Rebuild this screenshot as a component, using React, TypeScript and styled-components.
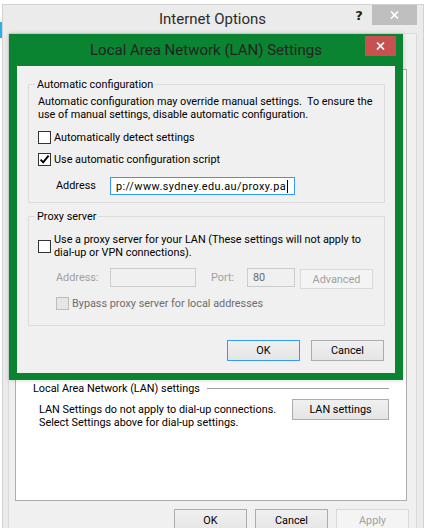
import React from 'react'
import styled, { createGlobalStyle } from 'styled-components'

const uiFont = `Roboto, 'Noto Sans', 'DejaVu Sans', sans-serif`

const GlobalStyle = createGlobalStyle`
  * { box-sizing: border-box; }
  html, body { margin: 0; padding: 0; background: #ffffff; }
  body { font-family: ${uiFont}; font-size: 10.85px; color: #000000; }
`

const Desktop = styled.div`
  position: relative;
  width: 427px;
  height: 528px;
  overflow: hidden;
  background: #ffffff;
`

const DesktopSliver = styled.div`
  position: absolute;
  left: 0;
  top: 22px;
  width: 2px;
  height: 16px;
  background: #27b1e6;
`

const Window = styled.div`
  position: absolute;
  left: 2px;
  top: 4px;
  width: 422px;
  height: 540px;
  display: flex;
  flex-direction: column;
  padding: 0 6px 0 5px;
  background: #ebebeb;
  border: 1px solid #d2d2d2;
`

const CaptionBar = styled.div<{ $height: number }>`
  display: grid;
  grid-template-columns: 1fr auto 1fr;
  align-items: start;
  height: ${p => p.$height}px;
  flex-shrink: 0;
`

const Caption = styled.div<{ $color: string; $height: number }>`
  grid-column: 2;
  font-size: 15px;
  line-height: ${p => p.$height}px;
  color: ${p => p.$color};
  white-space: nowrap;
`

const CaptionControls = styled.div<{ $top?: number; $right?: number }>`
  grid-column: 3;
  justify-self: end;
  display: flex;
  margin-top: ${p => p.$top ?? 0}px;
  margin-right: ${p => p.$right ?? 0}px;
`

const HelpButton = styled.div`
  width: 26px;
  height: 20px;
  display: flex;
  align-items: center;
  justify-content: center;
  font-family: 'DejaVu Sans', sans-serif;
  font-size: 13px;
  font-weight: 700;
  color: #1e1e1e;
`

const CloseButton = styled.div<{ $width: number; $bg: string }>`
  width: ${p => p.$width}px;
  height: 20px;
  display: flex;
  align-items: center;
  justify-content: center;
  background: ${p => p.$bg};
`

const Client = styled.div`
  flex: 1;
  display: flex;
  flex-direction: column;
  padding: 0 9px 0 6px;
  background: #f0f0f0;
  border: 1px solid #dadada;
  border-bottom: none;
`

const TabStrip = styled.div`
  height: 35px;
  flex-shrink: 0;
`

const TabPanel = styled.div`
  width: 392px;
  height: 432px;
  display: flex;
  flex-direction: column;
  justify-content: flex-end;
  padding: 0 17px 71px 17px;
  background: #ffffff;
  border: 1px solid #adadad;
  flex-shrink: 0;
`

const SectionHeader = styled.div`
  display: flex;
  align-items: center;
  gap: 7px;
  line-height: 13px;
  white-space: nowrap;

  &::after {
    content: '';
    flex: 1;
    height: 1px;
    background: #a0a0a0;
  }
`

const SectionBody = styled.div`
  display: flex;
  justify-content: space-between;
  align-items: flex-start;
  margin-top: 4px;
`

const SectionText = styled.p`
  margin: 4px 0 0 6px;
  line-height: 13px;
  white-space: nowrap;
`

const PushButton = styled.div<{ $width: number; $height: number; $default?: boolean; $disabled?: boolean }>`
  width: ${p => p.$width}px;
  height: ${p => p.$height}px;
  display: flex;
  align-items: center;
  justify-content: center;
  flex-shrink: 0;
  white-space: nowrap;
  color: ${p => (p.$disabled ? '#a0a0a0' : '#000000')};
  background: ${p => (p.$disabled ? '#f4f4f4' : 'linear-gradient(#f0f0f0, #e5e5e5)')};
  border: 1px solid ${p => (p.$default ? '#3399ff' : p.$disabled ? '#d9d9d9' : '#acacac')};
`

const ButtonRow = styled.div<{ $gap: number; $top: number; $right: number }>`
  display: flex;
  justify-content: flex-end;
  gap: ${p => p.$gap}px;
  margin-top: ${p => p.$top}px;
  margin-right: ${p => p.$right}px;
  flex-shrink: 0;
`

const Dialog = styled.div`
  position: absolute;
  left: 9px;
  top: 34px;
  width: 394px;
  height: 346px;
  display: flex;
  flex-direction: column;
  padding: 0 8px 7px 8px;
  background: #0a8431;
  box-shadow: 0 0 5px rgba(0, 0, 0, 0.18);
`

const DialogClient = styled.div`
  flex: 1;
  display: flex;
  flex-direction: column;
  padding: 12px 10px 0 11px;
  background: #f0f0f0;
`

const GroupBox = styled.fieldset<{ $top?: number }>`
  margin: ${p => p.$top ?? 0}px 0 0 0;
  padding: 0;
  min-width: 0;
  border: 1px solid #dcdcdc;
`

const GroupLegend = styled.legend`
  margin-left: 6px;
  padding: 0 2px;
  line-height: 13px;
`

const GroupBody = styled.div<{ $top: number; $bottom: number }>`
  display: flex;
  flex-direction: column;
  padding: ${p => p.$top}px 8px ${p => p.$bottom}px 9px;
`

const Note = styled.p`
  margin: 0;
  line-height: 13px;
  white-space: nowrap;
`

const CheckRow = styled.div<{ $top?: number; $indent?: number }>`
  display: flex;
  align-items: center;
  gap: 3px;
  min-height: 16px;
  margin-top: ${p => p.$top ?? 0}px;
  margin-left: ${p => p.$indent ?? 0}px;
`

const CheckBox = styled.div<{ $disabled?: boolean }>`
  width: 13px;
  height: 13px;
  flex-shrink: 0;
  display: flex;
  align-items: center;
  justify-content: center;
  background: ${p => (p.$disabled ? '#e6e6e6' : '#ffffff')};
  border: 1px solid ${p => (p.$disabled ? '#bcbcbc' : '#333333')};
`

const CheckLabel = styled.span<{ $tone?: string }>`
  line-height: 13px;
  white-space: nowrap;
  color: ${p => p.$tone ?? '#000000'};
`

const FieldRow = styled.div<{ $top: number }>`
  display: flex;
  align-items: flex-start;
  margin-top: ${p => p.$top}px;
  margin-left: 18px;
`

const FieldLabel = styled.span<{ $width: number; $height: number; $gap?: number; $disabled?: boolean }>`
  width: ${p => p.$width}px;
  margin-left: ${p => p.$gap ?? 0}px;
  line-height: ${p => p.$height}px;
  flex-shrink: 0;
  color: ${p => (p.$disabled ? '#a0a0a0' : '#000000')};
`

const TextBox = styled.div<{ $width: number; $height: number; $focused?: boolean; $disabled?: boolean }>`
  width: ${p => p.$width}px;
  height: ${p => p.$height}px;
  flex-shrink: 0;
  display: flex;
  align-items: center;
  padding-left: 5px;
  overflow: hidden;
  white-space: nowrap;
  color: ${p => (p.$disabled ? '#6d6d6d' : '#000000')};
  background: ${p => (p.$disabled ? '#f0f0f0' : '#ffffff')};
  border: 1px solid ${p => (p.$focused ? '#3399ff' : p.$disabled ? '#cccccc' : '#abadb3')};
`

const UrlValue = styled.span`
  letter-spacing: 0.45px;
`

const SideButton = styled(PushButton)`
  margin-left: 5px;
  margin-top: 1px;
`

const Caret = styled.span`
  display: inline-block;
  width: 1px;
  height: 13px;
  margin-left: 1px;
  background: #000000;
`

const CloseGlyph = () => (
  <svg width="9" height="8" viewBox="0 0 9 8">
    <path d="M1 0.5 L8 7.5 M8 0.5 L1 7.5" stroke="#ffffff" strokeWidth="1.7" fill="none" />
  </svg>
)

const CheckGlyph = () => (
  <svg width="11" height="11" viewBox="0 0 11 11">
    <path d="M1.6 5.6 L4.2 8.4 L9.6 1.6" stroke="#000000" strokeWidth="1.9" fill="none" />
  </svg>
)

export default function App() {
  return (
    <Desktop>
      <GlobalStyle />
      <DesktopSliver />

      <Window>
        <CaptionBar $height={28}>
          <Caption $color="#2b2b2b" $height={28}>Internet Options</Caption>
          <CaptionControls>
            <HelpButton>?</HelpButton>
            <CloseButton $width={45} $bg="#bfbfbf">
              <CloseGlyph />
            </CloseButton>
          </CaptionControls>
        </CaptionBar>

        <Client>
          <TabStrip />

          <TabPanel>
            <SectionHeader>Local Area Network (LAN) settings</SectionHeader>
            <SectionBody>
              <SectionText>
                LAN Settings do not apply to dial-up connections.
                <br />
                Select Settings above for dial-up settings.
              </SectionText>
              <PushButton $width={97} $height={21}>LAN settings</PushButton>
            </SectionBody>
          </TabPanel>

          <ButtonRow $gap={8} $top={8} $right={-2}>
            <PushButton $width={73} $height={23}>OK</PushButton>
            <PushButton $width={73} $height={23}>Cancel</PushButton>
            <PushButton $width={73} $height={23} $disabled>Apply</PushButton>
          </ButtonRow>
        </Client>
      </Window>

      <Dialog>
        <CaptionBar $height={32}>
          <Caption $color="#222222" $height={32}>Local Area Network (LAN) Settings</Caption>
          <CaptionControls $top={2} $right={-1}>
            <CloseButton $width={31} $bg="#c75050">
              <CloseGlyph />
            </CloseButton>
          </CaptionControls>
        </CaptionBar>

        <DialogClient>
          <GroupBox>
            <GroupLegend>Automatic configuration</GroupLegend>
            <GroupBody $top={4} $bottom={7}>
              <Note>
                Automatic configuration may override manual settings.&nbsp; To ensure the
                <br />
                use of manual settings, disable automatic configuration.
              </Note>
              <CheckRow $top={8}>
                <CheckBox />
                <CheckLabel>Automatically detect settings</CheckLabel>
              </CheckRow>
              <CheckRow $top={6}>
                <CheckBox>
                  <CheckGlyph />
                </CheckBox>
                <CheckLabel>Use automatic configuration script</CheckLabel>
              </CheckRow>
              <FieldRow $top={10}>
                <FieldLabel $width={54} $height={18}>Address</FieldLabel>
                <TextBox $width={185} $height={18} $focused>
                  <UrlValue>p://www.sydney.edu.au/proxy.pa</UrlValue>
                  <Caret />
                </TextBox>
              </FieldRow>
            </GroupBody>
          </GroupBox>

          <GroupBox $top={7}>
            <GroupLegend>Proxy server</GroupLegend>
            <GroupBody $top={10} $bottom={14}>
              <CheckRow>
                <CheckBox />
                <CheckLabel>
                  Use a proxy server for your LAN (These settings will not apply to
                  <br />
                  dial-up or VPN connections).
                </CheckLabel>
              </CheckRow>
              <FieldRow $top={9}>
                <FieldLabel $width={54} $height={19} $disabled>Address:</FieldLabel>
                <TextBox $width={86} $height={19} $disabled />
                <FieldLabel $width={36} $height={19} $gap={15} $disabled>Port:</FieldLabel>
                <TextBox $width={48} $height={19} $disabled>80</TextBox>
                <SideButton $width={73} $height={20} $disabled>Advanced</SideButton>
              </FieldRow>
              <CheckRow $top={6} $indent={18}>
                <CheckBox $disabled />
                <CheckLabel $tone="#6d6d6d">Bypass proxy server for local addresses</CheckLabel>
              </CheckRow>
            </GroupBody>
          </GroupBox>

          <ButtonRow $gap={11} $top={14} $right={1}>
            <PushButton $width={73} $height={21} $default>OK</PushButton>
            <PushButton $width={73} $height={21}>Cancel</PushButton>
          </ButtonRow>
        </DialogClient>
      </Dialog>
    </Desktop>
  )
}
